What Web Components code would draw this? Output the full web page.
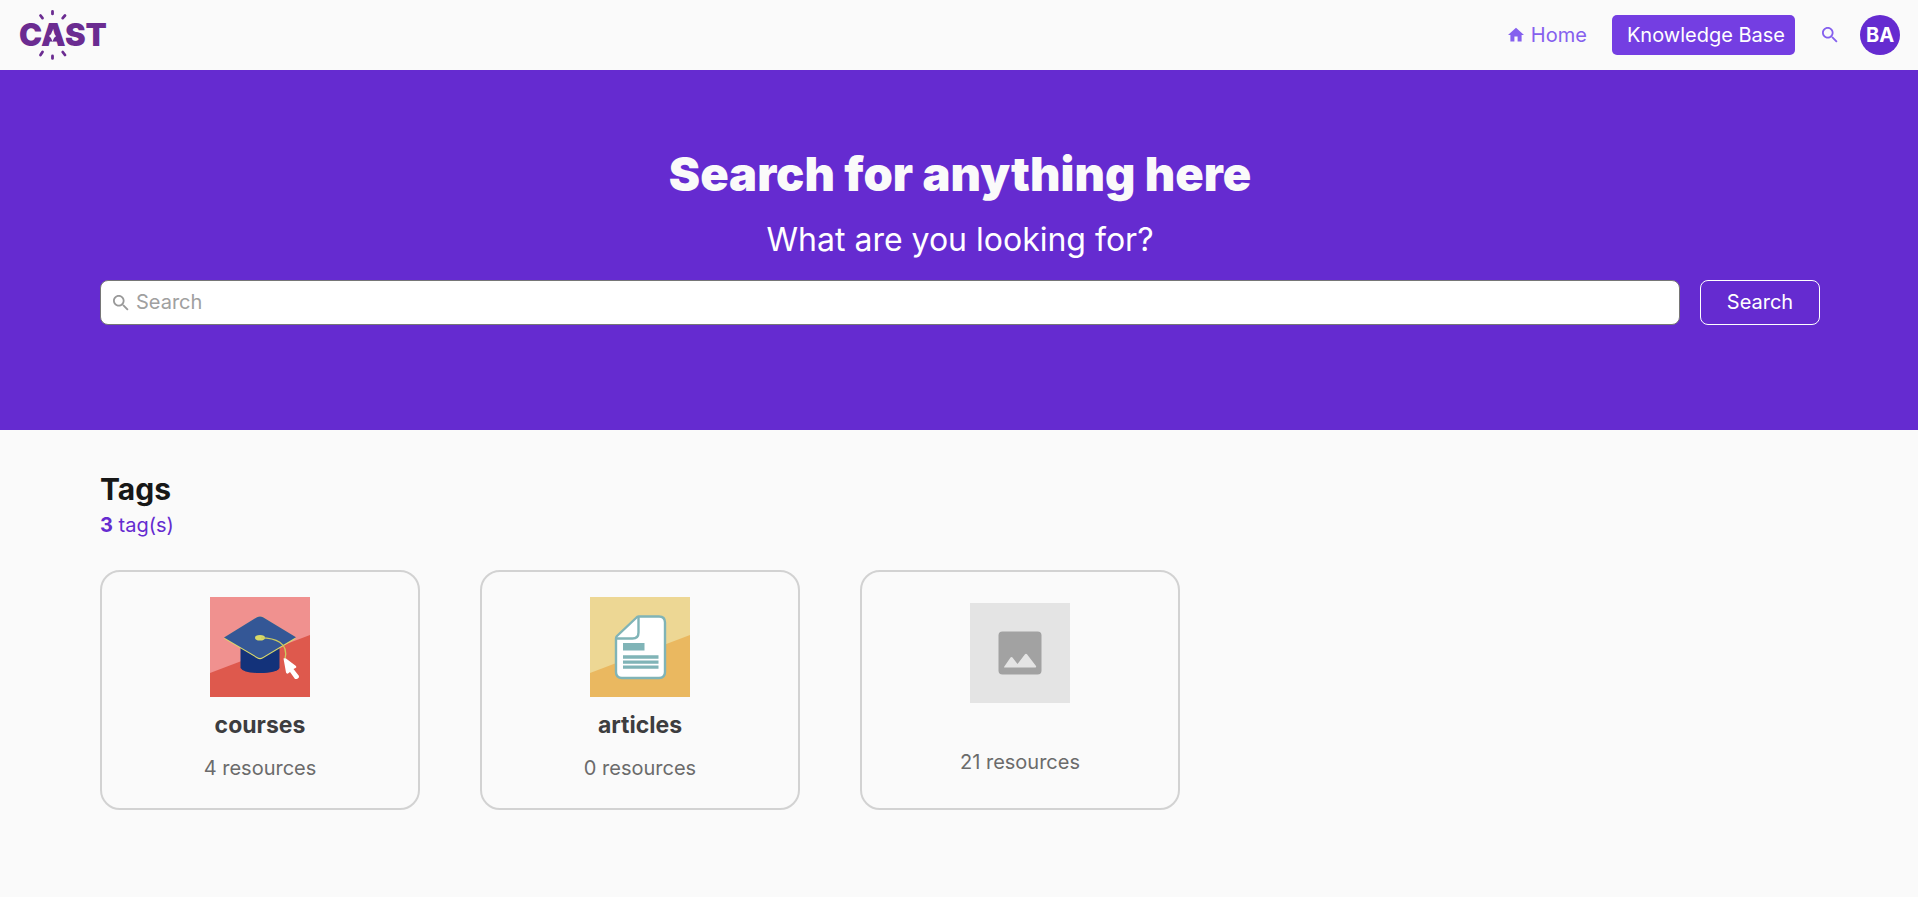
<!DOCTYPE html>
<html lang="en">
<head>
<meta charset="utf-8">
<title>Knowledge Base</title>
<style>
html, body { margin: 0; background: #fafafa; }
body { font-family: Inter, sans-serif; font-size: 20px; line-height: 24px; color: #18181b; }
</style>
</head>
<body>
<kb-page></kb-page>

<template id="t-page">
<style>
:host { display: block; }
main { padding: 39px 98px 80px 100px; }
h2 { margin: 0; font-size: 30px; line-height: 40px; font-weight: 700; color: #171717; }
p { margin: 4px 0 0; color: #652bd0; }
.cards { display: flex; flex-wrap: wrap; gap: 60px; margin-top: 33px; }
</style>
<kb-header></kb-header>
<kb-hero><span slot="title">Search for anything here</span><span slot="subtitle">What are you looking for?</span></kb-hero>
<main>
<h2>Tags</h2>
<p><b>3</b> tag(s)</p>
<div class="cards">
<tag-card><kb-art slot="art" name="courses"></kb-art><span slot="name">courses</span>4 resources</tag-card>
<tag-card><kb-art slot="art" name="articles"></kb-art><span slot="name">articles</span>0 resources</tag-card>
<tag-card unnamed><kb-art slot="art" name="placeholder"></kb-art>21 resources</tag-card>
</div>
</main>
</template>

<template id="t-header">
<style>
:host { display: block; }
header { display: flex; align-items: center; justify-content: space-between; height: 70px; padding: 0 18px 0 19px; box-sizing: border-box; }
nav { display: flex; align-items: center; }
a { text-decoration: none; color: #8560ee; }
.home { display: flex; align-items: center; gap: 7px; margin-right: 25px; }
.kb { background: #743ee2; color: #fff; border-radius: 5px; padding: 8px 10px 8px 15px; }
button { font: inherit; border: 0; padding: 0; background: none; display: flex; align-items: center; justify-content: center; }
.find { color: #8560ee; margin: 0 22px 0 27px; }
.user { width: 40px; height: 40px; border-radius: 50%; background: #652bd0; color: #fff; font-weight: 700; }
</style>
<header>
<cast-logo></cast-logo>
<nav>
<a class="home" href="#"><kb-icon name="home"></kb-icon>Home</a>
<a class="kb" href="#">Knowledge Base</a>
<button class="find" aria-label="Search"><kb-icon name="search"></kb-icon></button>
<button class="user">BA</button>
</nav>
</header>
</template>

<template id="t-logo">
<style>
:host { display: block; }
a { display: grid; place-items: center; text-decoration: none; color: #6b2c91; font-size: 31px; line-height: 52px; font-weight: 900; }
span, svg { grid-area: 1 / 1; }
svg { justify-self: start; }
</style>
<a href="#"><span>CAST</span>
<svg width="68" height="52" viewBox="0 0 68 52" fill="none" stroke="#6b2c91" stroke-width="2.8" stroke-linecap="round"><path d="M33.500 2.500v2.400M21.500 6.500l2 2.600M46 6.500l-2.300 2.600M33.500 47v2.400M23.500 43l-2 3M43.700 43l2.300 3"/><path d="M33.500 21.500q1 4 3.500 5.500q-2.500 1.500-3.500 5.500q-1-4-3.500-5.500q2.500-1.500 3.500-5.500z" fill="#fafafa" stroke="none"/></svg></a>
</template>

<template id="t-hero">
<style>
:host { display: block; background: #652bd0; color: #fff; }
section { padding: 68px 98px 105px 100px; text-align: center; }
h1 { margin: 0; font-size: 47px; line-height: 72px; font-weight: 900; color: #fafafa; }
p { margin: 0; font-size: 32px; line-height: 60px; }
form { display: flex; gap: 20px; margin-top: 10px; }
label { flex: 1; display: flex; align-items: center; gap: 7px; height: 45px; box-sizing: border-box; padding: 0 12px; background: #fff; border: 1px solid #767676; border-radius: 8px; color: #999; }
input { flex: 1; min-width: 0; font: inherit; color: #333; border: 0; padding: 0 0 2px; outline: 0; background: none; }
input::placeholder { color: #a0a0a0; opacity: 1; }
button { font: inherit; color: #fff; width: 120px; background: none; border: 1px solid #fff; border-radius: 8px; padding: 0 0 2px; }
</style>
<section>
<h1><slot name="title"></slot></h1>
<p><slot name="subtitle"></slot></p>
<form><label><kb-icon name="search"></kb-icon><input type="text" placeholder="Search" aria-label="Search"></label><button type="button">Search</button></form>
</section>
</template>

<template id="t-card">
<style>
:host { display: flex; flex-direction: column; align-items: center; width: 320px; height: 240px; box-sizing: border-box; border: 2px solid #d2d2d2; border-radius: 20px; padding-top: 25px; color: #6b6b6b; }
:host([unnamed]) { padding-top: 31px; }
h3 { margin: 16px 0 0; font-size: 23px; line-height: 24px; height: 24px; font-weight: 700; color: #3d3d3f; }
:host([unnamed]) h3 { margin-top: 4px; }
p { margin: 19px 0 0; }
</style>
<slot name="art"></slot>
<h3><slot name="name"></slot></h3>
<p><slot></slot></p>
</template>

<script>
const tpl = id => document.getElementById(id).content.cloneNode(true);
const define = (tag, id) => customElements.define(tag, class extends HTMLElement {
  constructor() { super(); this.attachShadow({ mode: 'open' }).append(tpl(id)); }
});

const icons = {
  home: '<path d="M10 20v-6h4v6h5v-8h3L12 3 2 12h3v8z"/>',
  search: '<path d="M15.5 14h-.79l-.28-.27C15.410 12.590 16 11.110 16 9.500 16 5.910 13.090 3 9.500 3S3 5.910 3 9.500 5.910 16 9.500 16c1.610 0 3.090-.59 4.230-1.570l.27.28v.79l5 4.990L20.490 19l-4.990-5zm-6 0C7.010 14 5 11.990 5 9.500S7.010 5 9.500 5 14 7.010 14 9.500 11.990 14 9.500 14z"/>'
};
customElements.define('kb-icon', class extends HTMLElement {
  connectedCallback() {
    if (this.shadowRoot) return;
    this.attachShadow({ mode: 'open' }).innerHTML =
      `<style>:host{display:block}svg{display:block;fill:currentColor}</style>
       <svg width="16" height="16" viewBox="${this.getAttribute('name') === 'home' ? '2 2 20 20' : '3 3 18 18'}">${icons[this.getAttribute('name')]}</svg>`;
  }
});

const art = {
  courses: `<path fill="#f0918f" d="M0 0h100v100H0z"/><path fill="#de594d" d="M0 76L100 38v62H0z"/>
    <path fill="#13327a" d="M30.500 45h39v26q-3 5-19.500 5t-19.500-5z"/>
    <path fill="#dbd96a" d="M14 41.200Q15 40 16 39.500L47 20.300q3-1.600 6 0l31 19.200q3 1.600 0 3.200L53 61.200q-3 2-6 0L16 42.700z"/>
    <path fill="#345796" d="M14 40.500L47 20.200q3-1.600 6 0L86 40.300L53 59.900q-3 2-6 0z"/>
    <ellipse cx="50" cy="40.800" rx="5" ry="2.800" fill="#d8d967"/>
    <path d="M51 40.800c14 0 28 5 24 21" fill="none" stroke="#cdcb60" stroke-width="1.300"/>
    <path fill="#fff" d="M73.500 61.500q1.500-.6 2.500 0l10 7.500q1 1.500-.5 2l-2 1 5.500 7q.5 2-2 3h-2l-5-7-2 1.500q-1.500.5-2-1z"/>`,
  articles: `<path fill="#edd794" d="M0 0h100v100H0z"/><path fill="#eab860" d="M0 76L100 38v62H0z"/>
    <path d="M48.500 19.500H69q6 0 6 6V75q0 6-6 6H32q-6 0-6-6V41.500q0-1.500 1-2.500l19-18q1.300-1.500 2.500-1.500z" fill="#fff" stroke="#80b4b7" stroke-width="2.400"/>
    <path d="M48.500 20v15.500q0 6-6 6H27" fill="none" stroke="#80b4b7" stroke-width="2.400"/>
    <path fill="#80b4b7" d="M33 46h21.500v7.500H33zM33 58.300h35.500v3.400H33zM33 63.500h35.500v3.300H33zM33 68.500h35.500v3.300H33z"/>`,
  placeholder: `<path fill="#e4e4e4" d="M0 0h100v100H0z"/><rect x="28.500" y="28.500" width="43" height="43" rx="4" fill="#a2a2a2"/>
    <path fill="#e4e4e4" d="M34 64L40.500 54.500q1-1 2 0L47.500 61L55 51.200q1-1 2 0L66 63q.5 1.500-.5 1.500H35q-1 0-1-.5z"/>`
};
customElements.define('kb-art', class extends HTMLElement {
  connectedCallback() {
    if (this.shadowRoot) return;
    this.attachShadow({ mode: 'open' }).innerHTML =
      `<style>:host,svg{display:block}</style><svg width="100" height="100" viewBox="0 0 100 100" aria-hidden="true">${art[this.getAttribute('name')]}</svg>`;
  }
});

define('cast-logo', 't-logo');
define('tag-card', 't-card');
define('kb-header', 't-header');
define('kb-hero', 't-hero');
define('kb-page', 't-page');
</script>
</body>
</html>
